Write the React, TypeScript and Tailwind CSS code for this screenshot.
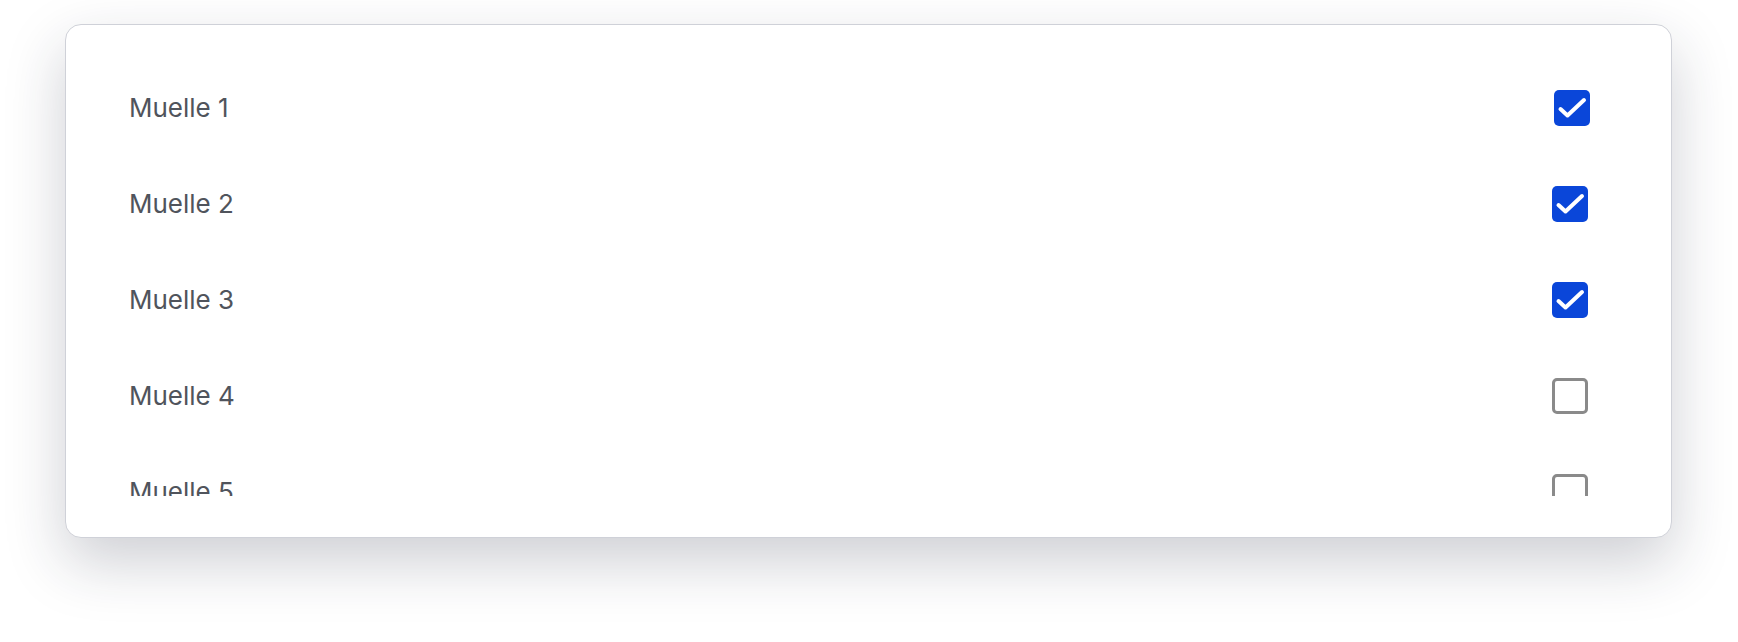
import React from "react";

// Dock list shown in a card; the last row is cut off by the scroll area
const muelles = [
  { id: 1, name: "Muelle 1", checked: true },
  { id: 2, name: "Muelle 2", checked: true },
  { id: 3, name: "Muelle 3", checked: true },
  { id: 4, name: "Muelle 4", checked: false },
  { id: 5, name: "Muelle 5", checked: false },
];

function Checkbox({ checked, nudge }: { checked: boolean; nudge?: boolean }) {
  if (checked) {
    return (
      <span
        className={`flex h-[36px] w-[36px] items-center justify-center rounded-[5px] bg-[#0a46d9] ${
          nudge ? "translate-x-[2px]" : ""
        }`}
      >
        <svg viewBox="0 0 36 36" className="h-[36px] w-[36px]">
          <path
            d="M6.5 19 L13.5 25.5 L30 10"
            fill="none"
            stroke="white"
            strokeWidth="4"
            strokeLinecap="round"
            strokeLinejoin="round"
          />
        </svg>
      </span>
    );
  }
  return (
    <span className="block h-[36px] w-[36px] rounded-[5px] border-[3px] border-[#8a8a8a] bg-white" />
  );
}

export default function App() {
  return (
    <div className="h-[642px] w-full bg-white pt-[24px]">
      <div className="ml-[65px] w-[1607px] rounded-[16px] border border-[#cfd1d8] bg-white pt-[35px] pb-[41px] shadow-[0_24px_60px_rgba(30,35,60,0.22)]">
        <div className="h-[436px] overflow-hidden">
          {muelles.map((m) => (
            <div
              key={m.id}
              className="flex h-[96px] items-center justify-between pl-[63px] pr-[83px]"
            >
              <span className="text-[26px] leading-none text-[#50545c] font-['Inter',sans-serif]">
                {m.name}
              </span>
              <Checkbox checked={m.checked} nudge={m.id === 1} />
            </div>
          ))}
        </div>
      </div>
    </div>
  );
}
